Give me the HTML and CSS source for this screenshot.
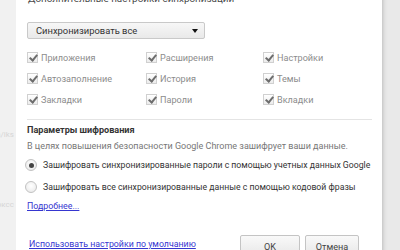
FILE: index.html
```html
<!DOCTYPE html>
<html lang="ru">
<head>
<meta charset="utf-8">
<link rel="stylesheet" href="styles.css">
</head>
<body>
<div class="page">
  <div class="backdrop">
    <span class="ghost g1">ya/iks</span>
    <span class="ghost g2">оксс</span>
  </div>
  <div class="dialog">
    <div class="title">Дополнительные настройки синхронизации</div>
    <div class="select">
      <span>Синхронизировать все</span>
      <span class="arrow"></span>
    </div>
    <div class="grid">
      <div class="cb"><span class="box"></span>Приложения</div>
      <div class="cb"><span class="box"></span>Расширения</div>
      <div class="cb"><span class="box"></span>Настройки</div>
      <div class="cb"><span class="box"></span>Автозаполнение</div>
      <div class="cb"><span class="box"></span>История</div>
      <div class="cb"><span class="box"></span>Темы</div>
      <div class="cb"><span class="box"></span>Закладки</div>
      <div class="cb"><span class="box"></span>Пароли</div>
      <div class="cb"><span class="box"></span>Вкладки</div>
    </div>
    <div class="sep"></div>
    <div class="section-title">Параметры шифрования</div>
    <div class="desc">В целях повышения безопасности Google Chrome зашифрует ваши данные.</div>
    <div class="radio checked"><span class="dot"></span>Зашифровать синхронизированные пароли с помощью учетных данных Google</div>
    <div class="radio"><span class="dot"></span>Зашифровать все синхронизированные данные с помощью кодовой фразы</div>
    <a class="link more" href="#">Подробнее...</a>
    <div class="footer">
      <a class="link" href="#">Использовать настройки по умолчанию</a>
      <div class="buttons">
        <button class="btn ok">OK</button>
        <button class="btn">Отмена</button>
      </div>
    </div>
  </div>
</div>
</body>
</html>
```
FILE: styles.css
```css
* { box-sizing: border-box; }
html, body { margin: 0; padding: 0; }
body {
  width: 400px;
  height: 250px;
  overflow: hidden;
  background: #e9e9e9;
  font-family: Roboto, "Noto Sans", sans-serif;
  font-size: 9px;
}
.page {
  display: flex;
  height: 250px;
}
.backdrop {
  width: 16px;
  flex: none;
  background: #f1f1f1;
  position: relative;
}
.ghost {
  position: absolute;
  color: #d6d6d6;
  font-size: 8px;
  right: 2px;
  white-space: nowrap;
}
.g1 { top: 130px; }
.g2 { top: 200px; }
.dialog {
  width: 366px;
  flex: none;
  background: #fff;
  margin-top: -9px;
  height: 270px;
  padding: 0 10px 0 11px;
  box-shadow: 0 0 5px rgba(0,0,0,0.28);
  color: #333;
}
.title {
  font-size: 9.9px;
  line-height: 16px;
  color: #4a4a4a;
  padding-left: 1px;
  white-space: nowrap;
}
.select {
  margin-top: 15px;
  width: 178px;
  height: 17px;
  border: 1px solid #c9c9c9;
  border-radius: 2px;
  background: linear-gradient(#f7f7f7, #e9e9e9);
  display: flex;
  align-items: center;
  justify-content: space-between;
  padding: 0 6px 0 8px;
  color: #333;
  line-height: 15px;
  font-size: 9.4px;
}
.arrow {
  width: 0;
  height: 0;
  border-left: 3.5px solid transparent;
  border-right: 3.5px solid transparent;
  border-top: 4px solid #111;
}
.grid {
  margin-top: 8px;
  display: grid;
  grid-template-columns: 119px 117px 1fr;
  grid-auto-rows: 21px;
  font-size: 9.1px;
}
.cb {
  display: flex;
  align-items: center;
  color: #8c8c8c;
}
.box {
  width: 11px;
  height: 11px;
  margin-right: 3px;
  border: 1px solid #d0d0d0;
  background: linear-gradient(#fff, #ececec);
  position: relative;
  flex: none;
}
.box::after {
  content: "";
  position: absolute;
  left: 3px;
  top: 0px;
  width: 3px;
  height: 6px;
  border-right: 2px solid #6d6d6d;
  border-bottom: 2px solid #6d6d6d;
  transform: rotate(40deg);
}
.sep {
  margin-top: 9px;
  height: 1px;
  background: #e4e4e4;
}
.section-title {
  margin-top: 2px;
  font-weight: bold;
  line-height: 16px;
  color: #333;
  font-size: 9.1px;
}
.desc {
  line-height: 16px;
  color: #777;
  white-space: nowrap;
}
.radio {
  display: flex;
  align-items: center;
  height: 22px;
  color: #333;
  white-space: nowrap;
  font-size: 8.7px;
}
.dot {
  width: 12px;
  height: 12px;
  border-radius: 50%;
  border: 1px solid #c2c2c2;
  background: radial-gradient(circle at 50% 40%, #fff, #e6e6e6);
  margin: 0 6px 0 -2px;
  position: relative;
  flex: none;
}
.checked .dot::after {
  content: "";
  position: absolute;
  left: 2.5px;
  top: 2.5px;
  width: 5px;
  height: 5px;
  border-radius: 50%;
  background: #444;
}
.link {
  color: #3636d0;
  text-decoration: underline;
  line-height: 16px;
  white-space: nowrap;
  font-size: 8.8px;
}
.more {
  display: block;
  width: max-content;
}
.footer {
  margin-top: 21px;
  display: flex;
  justify-content: space-between;
  align-items: flex-start;
  padding-right: 13px;
}
.footer .link { margin-top: 1px; margin-left: 2px; }
.buttons {
  display: flex;
  gap: 5px;
}
.btn {
  font-family: inherit;
  font-size: 9.1px;
  color: #444;
  height: 23px;
  border: 1px solid #c4c4c4;
  border-radius: 2px;
  background: linear-gradient(#f9f9f9, #e6e6e6);
  padding: 0;
}
.btn.ok { width: 60px; }
.btn:not(.ok) { width: 54px; }
```
